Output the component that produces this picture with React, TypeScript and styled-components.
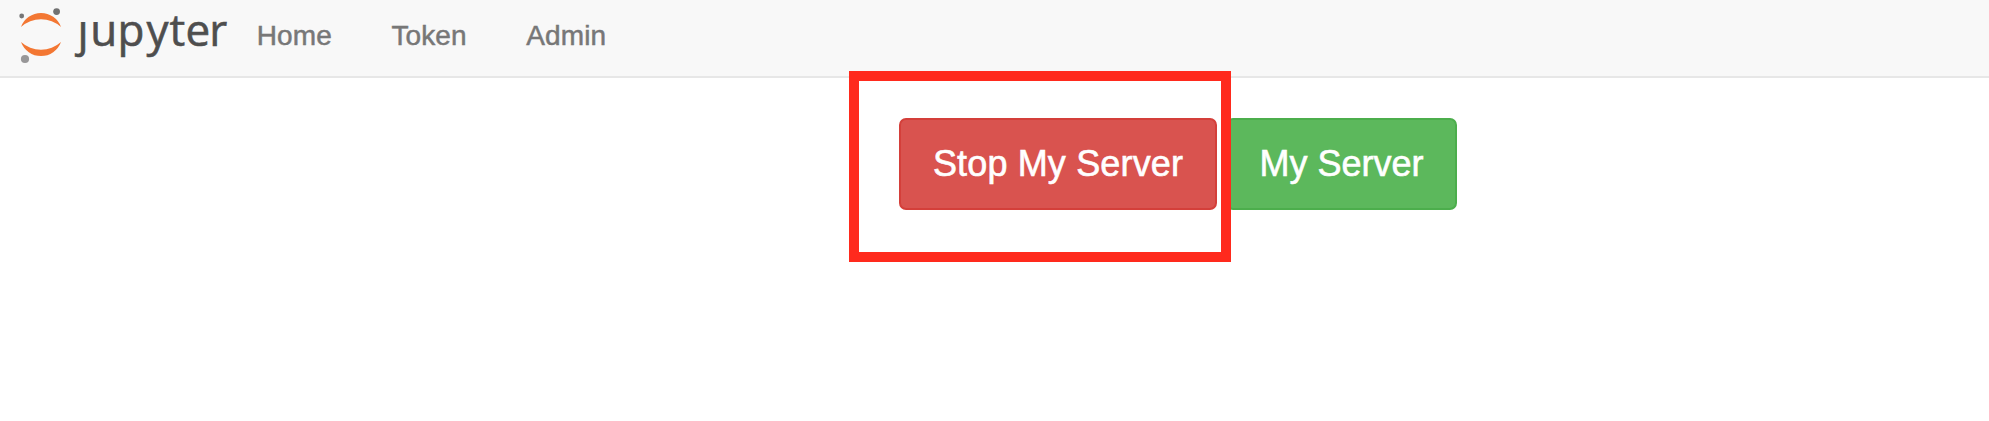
import React from "react";
import styled, { createGlobalStyle } from "styled-components";

const GlobalStyle = createGlobalStyle`
  body {
    margin: 0;
    background: #fff;
    font-family: "Liberation Sans", Helvetica, Arial, sans-serif;
  }
`;

const Page = styled.div`
  min-height: 421px;
  overflow: hidden;
`;

const Navbar = styled.nav`
  display: flex;
  height: 76px;
  background: #f8f8f8;
  border-bottom: 2px solid #e7e7e7;
`;

const Brand = styled.a`
  display: block;
  width: 227px;
  height: 76px;
`;

const NavLink = styled.a`
  padding: 20px 29.8px;
  color: #777;
  font-size: 28px;
  line-height: 32px;
  letter-spacing: 0.1px;
  -webkit-text-stroke: 0.5px #777;
  text-decoration: none;
`;

const Actions = styled.main`
  display: flex;
  gap: 9px;
  padding: 40px 0 0 899px;
`;

const ActionSlot = styled.div`
  position: relative;
`;

const Button = styled.button<{ $fill: string; $edge: string; $width: number; $tracking?: number }>`
  box-sizing: border-box;
  display: block;
  width: ${(p) => p.$width}px;
  height: 92px;
  padding: 0;
  border: 2px solid ${(p) => p.$edge};
  border-radius: 7px;
  background: ${(p) => p.$fill};
  color: #fff;
  font-family: inherit;
  font-size: 36px;
  line-height: 48px;
  letter-spacing: ${(p) => p.$tracking ?? 0}px;
  -webkit-text-stroke: 0.6px #fff;
  white-space: nowrap;
`;

const Highlight = styled.div`
  position: absolute;
  z-index: 1;
  inset: -47px -14px -52px -50px;
  border: 10px solid #ff2a1d;
  pointer-events: none;
`;

function JupyterLogo() {
  return (
    <svg width="240" height="76" viewBox="0 0 240 76" role="img">
      <defs>
        <clipPath id="dotless">
          <path d="M70 22H98V10H240V70H70Z" />
        </clipPath>
      </defs>
      <path d="M21 27A21.3 21.3 0 0 1 61 27A29.8 29.8 0 0 0 21 27Z" fill="#f37733" />
      <path d="M21 42A21.3 21.3 0 0 0 61 42A29.8 29.8 0 0 1 21 42Z" fill="#f37733" />
      <circle cx="21.7" cy="16" r="2.4" fill="#767677" />
      <circle cx="56.6" cy="11.6" r="3.4" fill="#717171" />
      <circle cx="25" cy="59" r="4.1" fill="#989798" />
      <text
        x="77.6 90.2 117.4 146.4 169.4 185.6 209.2"
        y="46"
        fontFamily='"Open Sans", "Noto Sans", sans-serif'
        fontSize="44"
        fill="#4e4e4e"
        stroke="#4e4e4e"
        strokeWidth="0.6"
        clipPath="url(#dotless)"
      >
        jupyter
      </text>
    </svg>
  );
}

export default function App() {
  return (
    <Page>
      <GlobalStyle />
      <Navbar>
        <Brand>
          <JupyterLogo />
        </Brand>
        <NavLink>Home</NavLink>
        <NavLink>Token</NavLink>
        <NavLink>Admin</NavLink>
      </Navbar>
      <Actions>
        <ActionSlot>
          <Button $fill="#d9534f" $edge="#d43f3a" $width={318} $tracking={0.15}>
            Stop My Server
          </Button>
          <Highlight />
        </ActionSlot>
        <Button $fill="#5cb85c" $edge="#4cae4c" $width={231}>
          My Server
        </Button>
      </Actions>
    </Page>
  );
}
